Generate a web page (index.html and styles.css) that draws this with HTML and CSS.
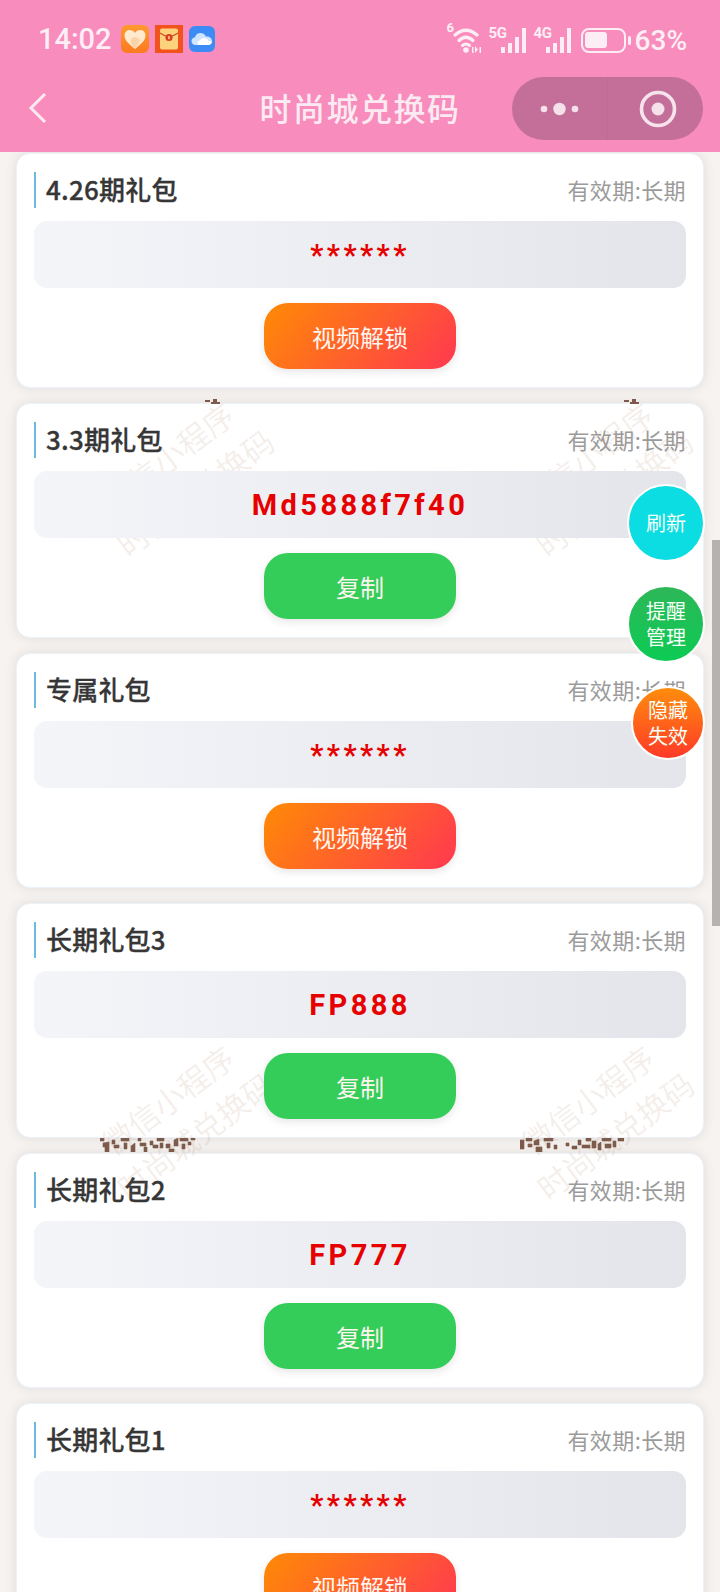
FILE: index.html
```html
<!DOCTYPE html>
<html lang="zh">
<head>
    <meta charset="UTF-8">
    <meta name="viewport" content="width=device-width, initial-scale=1.0">
    <title>时尚城兑换码</title>
    <link rel="stylesheet" href="styles.css">
</head>
<body>

<header class="top">
    <div class="status">
        <div class="status-left">
            <span class="time">14:02</span>
            <svg class="app-icon" viewBox="0 0 28 28">
                <defs>
                    <linearGradient id="heartBg" x1="0" y1="0" x2="0" y2="1">
                        <stop offset="0" stop-color="#ff9a2e"/><stop offset="1" stop-color="#fb7a20"/>
                    </linearGradient>
                </defs>
                <rect width="28" height="28" rx="6" fill="url(#heartBg)"/>
                <path d="M14 24 C8 19 3.5 15.5 3.5 10.5 C3.5 7 6 5 8.8 5 C11 5 13 6.2 14 8 C15 6.2 17 5 19.2 5 C22 5 24.5 7 24.5 10.5 C24.5 15.5 20 19 14 24 Z" fill="#ffe9cf"/>
                <path d="M14 24 C10 20 8.5 16 11 13 C13 11 17 12 19 15 C18 18 16.500 21 14 24 Z" fill="#fbd3a6"/>
            </svg>
            <svg class="app-icon" viewBox="0 0 28 28">
                <rect width="28" height="28" fill="#f2521c"/>
                <rect x="5" y="3.500" width="18" height="21" rx="2" fill="#fdd27c"/>
                <path d="M5 8 Q14 15 23 8" fill="none" stroke="#c9502a" stroke-width="1.200"/>
                <circle cx="14" cy="12.500" r="3.600" fill="#d83c24"/>
                <rect x="13.200" y="11" width="1.600" height="3.200" fill="#fdd27c"/>
            </svg>
            <svg class="app-icon icon-cloud" viewBox="0 0 26 26">
                <rect width="26" height="26" rx="6" fill="#3d8bf5"/>
                <path d="M7 19 C3.800 19 2.500 16.800 2.500 15 C2.500 13 4 11.500 6 11.300 C6.700 8.500 9 7 11.500 7 C14 7 16 8.300 16.800 10.500 C20 10 23 12 23 15 C23 17.500 21 19 19 19 Z" fill="#cfe4ff"/>
                <path d="M11 19 C9.500 19 8.500 18 8.500 16.700 C8.500 15.300 9.700 14.300 11 14.400 C11.800 12.700 13.300 12 15 12 C17.500 12 19.300 13.500 19.500 15 C21 15 23 15.500 23 16 C22.500 18 21 19 19 19 Z" fill="#ffffff"/>
            </svg>
        </div>
        <div class="status-right">
            <sup class="wifi-six">6</sup>
            <svg class="wifi" viewBox="0 0 30 26">
                <path d="M2 8 Q13 -1.500 24 8" fill="none" stroke="#fdeef5" stroke-width="3.200" stroke-linecap="round"/>
                <path d="M6 13.500 Q13 7 20 13.500" fill="none" stroke="#fdeef5" stroke-width="3.200" stroke-linecap="round"/>
                <path d="M9.500 18.500 Q13 15.500 16.500 18.500" fill="none" stroke="#fdeef5" stroke-width="3" stroke-linecap="round"/>
                <circle cx="13" cy="23" r="2.800" fill="#fdeef5"/>
                <path d="M19 20h1.500v6H19zM22 19l3 3.500-3 3.500zM26.500 20H28v6h-1.500z" fill="#fdeef5"/>
            </svg>
            <div class="signal">
                <span class="net">5G</span>
                <i class="bar b1"></i><i class="bar b2"></i><i class="bar b3"></i><i class="bar b4"></i>
            </div>
            <div class="signal">
                <span class="net">4G</span>
                <i class="bar b1"></i><i class="bar b2"></i><i class="bar b3"></i><i class="bar b4"></i>
            </div>
            <div class="battery"><div class="battery-fill"></div></div>
            <i class="battery-tip"></i>
            <span class="percent">63%</span>
        </div>
    </div>
    <nav class="nav">
        <svg class="back" viewBox="0 0 20 32">
            <path d="M17 2 L3 16 L17 30" fill="none" stroke="#fbeaf2" stroke-width="3"/>
        </svg>
        <div class="nav-title">时尚城兑换码</div>
        <div class="capsule">
            <div class="capsule-part">
                <svg class="dots" viewBox="0 0 40 14">
                    <circle cx="4" cy="7" r="3.300" fill="#f5e1ea"/>
                    <circle cx="19.500" cy="7" r="6.200" fill="#f5e1ea"/>
                    <circle cx="35" cy="7" r="3.300" fill="#f5e1ea"/>
                </svg>
            </div>
            <div class="capsule-part">
                <svg class="record" viewBox="0 0 38 38">
                    <circle cx="19" cy="19" r="16.500" fill="none" stroke="#f7e3ec" stroke-width="3.600"/>
                    <circle cx="19" cy="19" r="6.500" fill="#f5e1ea"/>
                </svg>
            </div>
        </div>
    </nav>
</header>

<main class="page">
    <div class="poster poster-a">微信小程序<br>时尚城兑换码</div>
    <div class="poster poster-b">微信小程序<br>时尚城兑换码</div>
    <div class="poster poster-c">微信小程序<br>时尚城兑换码</div>
    <div class="poster poster-d">微信小程序<br>时尚城兑换码</div>

    <svg class="qr qr-a" viewBox="0 0 20 8"><path d="M2 4h5v2H2zM8 6h9v2H8zM10 3h4v3h-4z" fill="#7d5a4c"/></svg>
    <svg class="qr qr-b" viewBox="0 0 20 8"><path d="M2 4h5v2H2zM8 6h9v2H8zM10 3h4v3h-4z" fill="#7d5a4c"/></svg>
    <svg class="qr qr-c" viewBox="0 0 96 14">
        <path d="M0 0h4v3H0zM3 5l6-1v10H5V9H3zM12 2h3v4h-3zM14 7h5v3h-5zM21 0h8v3h-8zM24 5h3v6h-3zM31 8l4-3v9h-4zM38 0h3v3h-3zM40 5h6v3h-6zM44 9h3v5h-3zM50 3h3v4h-3zM53 7h5v3h-5zM57 0h7v3h-7zM60 5h3v5h-3zM66 6h4v4h-4zM69 11h5v3h-5zM74 2l4-2v8h-4zM80 0h8v3h-8zM82 6h3v5h-3zM88 4h3v3h-3zM91 0h4v2h-4z" fill="#7d5a4c" stroke="#7d5a4c" stroke-width="0.600"/>
    </svg>
    <svg class="qr qr-d" viewBox="0 0 104 14">
        <path d="M0 2h4v9H0zM6 0h6v3H6zM8 6h4v3H8zM14 3l5-2v6h-5zM16 9h6v5h-6zM24 0h9v3h-9zM27 5h3v5h-3zM34 7h3v4h-3zM46 5h3v3h-3zM52 8h5v3h-5zM58 2h3v5h-3zM62 7h8v3h-8zM66 0h5v3h-5zM72 3h4v7h-4zM78 6l3-2v8h-3zM82 0h9v3h-9zM85 6h6v4h-6zM93 3h3v6h-3zM98 0h6v3h-6z" fill="#7d5a4c" stroke="#7d5a4c" stroke-width="0.600"/>
    </svg>

    <section class="card">
        <div class="card-head">
            <h2 class="card-name">4.26期礼包</h2>
            <span class="card-valid">有效期:长期</span>
        </div>
        <div class="code">******</div>
        <button class="action action-video">视频解锁</button>
    </section>

    <section class="card">
        <div class="card-head">
            <h2 class="card-name">3.3期礼包</h2>
            <span class="card-valid">有效期:长期</span>
        </div>
        <div class="code">Md5888f7f40</div>
        <button class="action action-copy">复制</button>
    </section>

    <section class="card">
        <div class="card-head">
            <h2 class="card-name">专属礼包</h2>
            <span class="card-valid">有效期:长期</span>
        </div>
        <div class="code">******</div>
        <button class="action action-video">视频解锁</button>
    </section>

    <section class="card">
        <div class="card-head">
            <h2 class="card-name">长期礼包3</h2>
            <span class="card-valid">有效期:长期</span>
        </div>
        <div class="code">FP888</div>
        <button class="action action-copy">复制</button>
    </section>

    <section class="card">
        <div class="card-head">
            <h2 class="card-name">长期礼包2</h2>
            <span class="card-valid">有效期:长期</span>
        </div>
        <div class="code">FP777</div>
        <button class="action action-copy">复制</button>
    </section>

    <section class="card">
        <div class="card-head">
            <h2 class="card-name">长期礼包1</h2>
            <span class="card-valid">有效期:长期</span>
        </div>
        <div class="code">******</div>
        <button class="action action-video">视频解锁</button>
    </section>

    <div class="float float-refresh">刷新</div>
    <div class="float float-remind">提醒<br>管理</div>
    <div class="float float-hide">隐藏<br>失效</div>
    <div class="scroll-thumb"></div>
</main>

</body>
</html>
```

FILE: styles.css
```css
* {
    box-sizing: border-box;
}

html, body {
    margin: 0;
    height: 1592px;
    overflow: hidden;
}

body {
    font-family: "Noto Sans CJK SC", "Noto Sans", sans-serif;
    background-color: #f6f3f0;
    display: flex;
    flex-direction: column;
}

/* status bar + nav */
.top {
    height: 152px;
    flex: none;
    background-color: #f88cbc;
    color: #fdeef5;
}

.status {
    height: 77px;
    padding: 0 33px 0 38px;
    display: flex;
    justify-content: space-between;
    align-items: center;
}

.status-left, .status-right {
    display: flex;
    align-items: center;
}

.time {
    font-family: Roboto, sans-serif;
    font-size: 29px;
    font-weight: 500;
    margin-right: 9px;
}

.app-icon {
    width: 28px;
    height: 28px;
    margin-right: 6px;
}

.icon-cloud {
    width: 26px;
    height: 26px;
}

.status-right {
    position: relative;
    padding-top: 3px;
}

.wifi {
    width: 30px;
    height: 26px;
    margin-right: 6px;
}

.wifi-six {
    position: absolute;
    left: -6px;
    top: 0;
    font-family: Roboto, sans-serif;
    font-size: 13px;
    font-weight: 700;
    line-height: 14px;
    margin: 0;
}

.signal {
    position: relative;
    width: 37px;
    height: 26px;
    margin-right: 8px;
    display: flex;
    align-items: flex-end;
    justify-content: flex-end;
    gap: 3px;
}

.net {
    position: absolute;
    left: 0;
    top: -1px;
    font-family: Roboto, sans-serif;
    font-size: 15px;
    font-weight: 700;
    letter-spacing: -0.5px;
    line-height: 14px;
}

.bar {
    width: 4px;
    background-color: #fdeef5;
}

.b1 { height: 6px; }
.b2 { height: 10px; }
.b3 { height: 16px; }
.b4 { height: 25px; }

.battery {
    width: 45px;
    height: 25px;
    margin-left: 2px;
    border: 2.5px solid #fdeef5;
    border-radius: 8px;
    padding: 2.5px;
}

.battery-fill {
    width: 62%;
    height: 100%;
    background-color: #fdeef5;
    border-radius: 3px;
}

.battery-tip {
    width: 3px;
    height: 9px;
    margin: 0 4px 0 2px;
    border-radius: 2px;
    background-color: #fdeef5;
}

.percent {
    font-family: Roboto, sans-serif;
    font-size: 28px;
    font-weight: 500;
}

.nav {
    position: relative;
    height: 75px;
    display: flex;
    align-items: center;
    justify-content: center;
}

.back {
    position: absolute;
    left: 28px;
    top: 15px;
    width: 20px;
    height: 32px;
}

.nav-title {
    font-size: 32px;
    font-weight: 500;
    line-height: 64px;
    margin-top: -16px;
    letter-spacing: 1.5px;
    color: #fbeaf2;
}

.capsule {
    position: absolute;
    right: 17px;
    top: 0;
    width: 191px;
    height: 63px;
    border-radius: 32px;
    background-color: #c46f9a;
    display: flex;
}

.capsule-part {
    flex: 1;
    display: flex;
    align-items: center;
    justify-content: center;
}

.capsule-part + .capsule-part {
    border-left: 1px solid #be6c96;
}

.dots {
    width: 40px;
    height: 14px;
}

.record {
    width: 38px;
    height: 38px;
    margin-left: 4px;
}

/* list */
.page {
    position: relative;
    flex: 1;
    overflow: hidden;
    padding: 1px 16px 0;
    display: flex;
    flex-direction: column;
    gap: 15px;
}

.card {
    flex: none;
    height: 235px;
    padding: 18px 17px 0;
    border-radius: 14px;
    background-color: #ffffff;
    border: 1px solid #ecf2fa;
    box-shadow: 0 0 12px rgba(60, 60, 60, 0.12);
    display: flex;
    flex-direction: column;
    align-items: center;
}

.card-head {
    width: 100%;
    height: 36px;
    display: flex;
    justify-content: space-between;
    align-items: center;
    border-left: 2px solid #6cbbe0;
    padding: 0 0 3px 10px;
}

.card-name {
    margin: 0;
    font-size: 26px;
    font-weight: 500;
    letter-spacing: 0.2px;
    color: #363636;
    -webkit-text-stroke: 0.3px #363636;
}

.card-valid {
    font-size: 22px;
    letter-spacing: 0.4px;
    color: #9b9b9b;
}

.code {
    position: relative;
    z-index: 2;
    width: 100%;
    height: 67px;
    margin-top: 13px;
    border-radius: 13px;
    background: linear-gradient(to right, #f4f5f9, #e3e5ea);
    font-family: Roboto, sans-serif;
    font-size: 29px;
    font-weight: 700;
    letter-spacing: 3.4px;
    color: #e60000;
    display: flex;
    align-items: center;
    justify-content: center;
}

.action {
    position: relative;
    z-index: 2;
    width: 192px;
    height: 66px;
    margin-top: 15px;
    border: none;
    border-radius: 24px;
    font-family: inherit;
    font-size: 24px;
    color: #fff5ee;
    box-shadow: 0 3px 8px rgba(0, 0, 0, 0.1);
}

.action-video {
    background: linear-gradient(130deg, #ff8a05, #ff3850);
}

.action-copy {
    background-color: #34cd5a;
}

/* background picture, shows faintly over the cards */
.poster {
    position: absolute;
    z-index: 1;
    width: 260px;
    text-align: center;
    font-size: 31px;
    line-height: 45px;
    color: rgba(170, 120, 90, 0.12);
    white-space: nowrap;
    transform: rotate(-37deg);
}

.poster-a { left: 51px; top: 277px; }
.poster-b { left: 470px; top: 277px; }
.poster-c { left: 51px; top: 920px; }
.poster-d { left: 471px; top: 920px; }

.qr {
    position: absolute;
}

.qr-a { left: 203px; top: 244px; width: 20px; height: 8px; }
.qr-b { left: 622px; top: 244px; width: 20px; height: 8px; }
.qr-c { left: 100px; top: 986px; width: 96px; height: 14px; }
.qr-d { left: 520px; top: 986px; width: 104px; height: 14px; }

/* things floating over the list */
.float {
    position: absolute;
    z-index: 3;
    right: 15px;
    width: 78px;
    height: 78px;
    border-radius: 50%;
    border: 2px solid #ffffff;
    color: #f6fff8;
    font-size: 20px;
    line-height: 26px;
    text-align: center;
    display: flex;
    align-items: center;
    justify-content: center;
}

.float-refresh {
    top: 332px;
    background-color: #0cdde2;
}

.float-remind {
    top: 433px;
    background: linear-gradient(to bottom, #2db758, #0dcb54);
}

.float-hide {
    top: 534px;
    width: 74px;
    height: 74px;
    background: linear-gradient(to bottom, #ff8d0c, #ff3a28);
}

.scroll-thumb {
    position: absolute;
    z-index: 3;
    right: 0;
    top: 388px;
    width: 8px;
    height: 386px;
    background-color: #b5b2b0;
}
```
